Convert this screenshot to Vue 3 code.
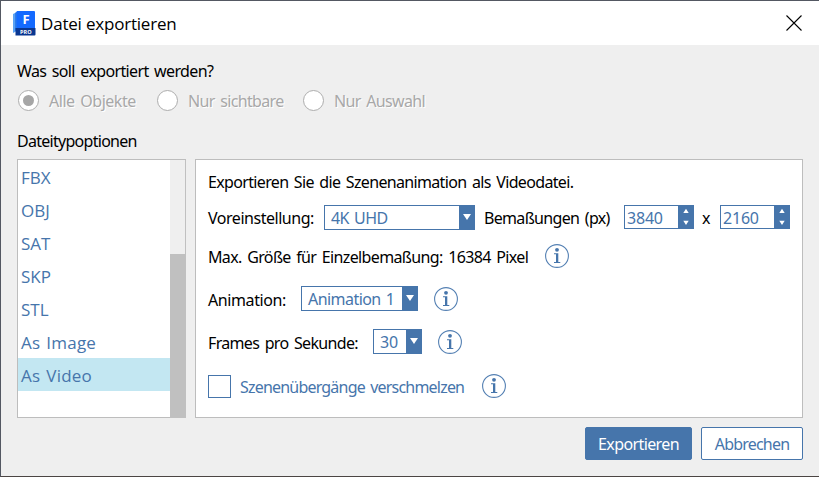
<script setup>
import { ref, h } from 'vue'

const scopes = [
  { label: 'Alle Objekte', cls: 'scope-all' },
  { label: 'Nur sichtbare', cls: 'scope-visible' },
  { label: 'Nur Auswahl', cls: 'scope-selection' },
]
const types = ['FBX', 'OBJ', 'SAT', 'SKP', 'STL', 'As Image', 'As Video']
const selected = ref('As Video')

const InfoIcon = () =>
  h('svg', { class: 'info', width: 24, height: 24, viewBox: '0 0 24 24', fill: 'none' }, [
    h('circle', { cx: 12, cy: 12, r: 11.4, stroke: '#5480b3', 'stroke-width': 1.1 }),
    h('circle', { cx: 12, cy: 5.8, r: 1.9, fill: '#4675ab' }),
    h('path', { d: 'M9 9.2h4.3v8.9h2v1H9v-1h2v-7.800H9z', fill: '#4675ab' }),
  ])

const Caret = () =>
  h('svg', { width: 16, height: 25, viewBox: '0 0 16 25' }, [
    h('path', { d: 'M4 9h8l-4 6z', fill: '#fff' }),
  ])

const Stepper = () =>
  h('svg', { width: 16, height: 24, viewBox: '0 0 16 24' }, [
    h('path', { d: 'M5.3 8L8 3.7 10.7 8zM5.3 15.8h5.4L8 20z', fill: '#fff' }),
  ])
</script>

<template>
  <div class="dialog">
    <header class="titlebar">
      <svg class="logo" width="23" height="26" viewBox="0 0 23 26">
        <path d="M0 3l4-2v19l-4 2z" fill="#5aa2f5" />
        <path d="M2 2l3-2v20H2z" fill="#2f7ce8" />
        <rect x="3.500" y="0" width="18.500" height="20" rx="1" fill="#146aff" />
        <path d="M2.500 17h20V23.500q0 1-1 1h-19z" fill="#0a3791" />
        <text x="13" y="12.800" class="logo-f">F</text>
        <text x="12.800" y="22.500" class="logo-pro">PRO</text>
      </svg>
      <h1 class="title">Datei exportieren</h1>
      <svg class="close" width="16" height="16" viewBox="0 0 16 16">
        <path d="M.5.5l15 15M15.500.5l-15 15" stroke="#000" stroke-width="1.100" />
      </svg>
    </header>

    <main class="body">
      <p class="heading question">Was soll exportiert werden?</p>
      <div class="radios">
        <label v-for="(s, i) in scopes" :key="s.label" class="radio" :class="s.cls">
          <span class="dot" :class="{ on: i === 0 }"></span>
          <span class="radio-text">{{ s.label }}</span>
        </label>
      </div>
      <p class="heading options">Dateitypoptionen</p>

      <div class="columns">
        <div class="list">
          <ul class="items">
            <li v-for="t in types" :key="t" :class="{ active: t === selected, wide: t.includes(' ') }">{{ t }}</li>
          </ul>
          <div class="scrollbar"><div class="thumb"></div></div>
        </div>

        <section class="panel">
          <p class="line intro"><span class="t-intro">Exportieren Sie die Szenenanimation als Videodatei.</span></p>
          <div class="line preset">
            <span class="t-preset">Voreinstellung:</span>
            <div class="select w-preset"><span class="value">4K UHD</span><i class="btn"><Caret /></i></div>
            <span class="t-dims">Bemaßungen (px)</span>
            <div class="spin"><span class="value">3840</span><i class="btn"><Stepper /></i></div>
            <span class="t-x">x</span>
            <div class="spin"><span class="value">2160</span><i class="btn"><Stepper /></i></div>
          </div>
          <div class="line max"><span class="t-max">Max. Größe für Einzelbemaßung: 16384 Pixel</span><InfoIcon /></div>
          <div class="line anim">
            <span class="t-anim">Animation:</span>
            <div class="select w-anim"><span class="value">Animation 1</span><i class="btn"><Caret /></i></div>
            <InfoIcon />
          </div>
          <div class="line fps">
            <span class="t-fps">Frames pro Sekunde:</span>
            <div class="select w-fps"><span class="value">30</span><i class="btn"><Caret /></i></div>
            <InfoIcon />
          </div>
          <div class="line merge">
            <span class="checkbox"></span>
            <span class="t-merge">Szenenübergänge verschmelzen</span>
            <InfoIcon />
          </div>
        </section>
      </div>

      <footer class="footer">
        <button class="primary"><span>Exportieren</span></button>
        <button class="secondary"><span>Abbrechen</span></button>
      </footer>
    </main>
  </div>
</template>

<style>
body { margin: 0; overflow: hidden; }
</style>

<style scoped>
* { box-sizing: border-box; }
.dialog {
  width: 819px; height: 477px; display: flex; flex-direction: column;
  background: #efefef; border: solid #535862; border-width: 1px 0 1px 1px;
  border-bottom-color: #4b4543;
  font-family: "Noto Sans", "Open Sans", sans-serif; font-size: 16px; color: #000;
  white-space: nowrap;
}
.titlebar { height: 44px; flex: none; background: #fff; display: flex; align-items: center; padding: 0 17px 0 12px; }
.logo { margin-top: 1px; }
.logo-f { font: 700 13px "Open Sans", sans-serif; fill: #fff; text-anchor: middle; }
.logo-pro { font: 700 5.5px "Open Sans", sans-serif; fill: #fff; text-anchor: middle; }
.title { margin: 1px auto 0 5px; font: 400 17px/24px "Open Sans", sans-serif; letter-spacing: -0.2px; }
.body { flex: 1; padding: 14px 16px 0; }
.heading { margin: 0; height: 24px; line-height: 24px; }
.question { letter-spacing: -0.64px; word-spacing: 2px; }
.radios { display: flex; height: 21px; margin: 7px 0 0 1px; color: #a8a8a8; }
.radio { display: flex; align-items: center; gap: 10px; }
.scope-all { width: 139px; }
.scope-visible { width: 146px; }
.radio-text { letter-spacing: -0.65px; word-spacing: 2px; text-shadow: 1px 1px 0 #fff; }
.scope-all .radio-text { letter-spacing: -0.48px; }
.dot { width: 21px; height: 21px; border: 1px solid #adadad; border-radius: 50%; background: #fff; display: grid; place-items: center; }
.dot.on::after { content: ""; width: 11px; height: 11px; border-radius: 50%; background: #a6a6a6; }
.options { margin-top: 18px; letter-spacing: -0.72px; }
.columns { display: flex; gap: 9px; height: 259px; margin-top: 6px; }
.list { width: 169px; display: flex; border: solid #bdbdbd; border-width: 1px 0 1px 1px; background: #fff; }
.items { flex: 1; margin: 0; padding: 0; list-style: none; }
.items li { height: 33px; padding: 1px 0 0 3px; line-height: 33px; font-family: "Open Sans", sans-serif; font-size: 17px; color: #4675ab; }
.items li.wide { letter-spacing: 0.2px; word-spacing: 1.5px; }
.items li.active { background: #c3e7f2; }
.scrollbar { width: 16px; margin-bottom: -1px; background: #efefef; border-right: 1px solid #c0c0c0; }
.thumb { height: 164px; margin: 94px -1px 0 0; background: #c0c0c0; }
.panel { width: 608px; border: 1px solid #bdbdbd; background: #fff; padding-left: 12px; }
.line { display: flex; align-items: center; margin: 0; }
.intro { height: 24px; margin-top: 10px; }
.preset { height: 25px; margin-top: 11px; }
.max { height: 24px; margin-top: 14px; }
.anim { height: 25px; margin-top: 18px; }
.fps { height: 25px; margin-top: 18px; }
.merge { height: 24px; margin-top: 20px; }
.t-intro { letter-spacing: -0.66px; word-spacing: 2px; }
.t-preset { width: 116px; letter-spacing: -0.47px; }
.t-dims { width: 140px; margin-left: 9px; letter-spacing: -0.67px; word-spacing: 2px; }
.t-x { width: 26px; padding-left: 8px; }
.t-max { width: 337px; letter-spacing: -0.64px; word-spacing: 2px; padding-top: 1px; }
.t-anim { width: 93px; letter-spacing: -0.4px; padding-top: 2px; }
.t-fps { width: 165px; letter-spacing: -0.67px; word-spacing: 2px; padding-top: 2px; }
.t-merge { width: 242px; margin-left: 9px; color: #4675ab; letter-spacing: -0.8px; word-spacing: 2px; padding-top: 1px; }
.select, .spin { display: flex; height: 25px; border: 1px solid #4675ab; color: #4675ab; }
.spin { width: 70px; height: 24px; align-self: flex-start; }
.value { flex: 1; width: 0; padding-left: 6px; line-height: 24px; letter-spacing: -0.55px; word-spacing: 1.5px; }
.spin .value { padding-left: 2px; line-height: 24px; letter-spacing: -0.2px; }
.w-fps .value { letter-spacing: -0.2px; }
.btn { display: block; width: 16px; margin: -1px; background: #4675ab; }
.btn svg { display: block; }
.w-preset { width: 151px; }
.w-anim { width: 117px; margin-right: 16px; }
.w-fps { width: 49px; margin-right: 16px; }
.checkbox { width: 23px; height: 23px; border: 1px solid #4675ab; background: #fff; }
.footer { display: flex; justify-content: flex-end; gap: 9px; margin-top: 9px; }
button { height: 33px; padding: 0; border: 1px solid #4675ab; border-radius: 2px; font: inherit; letter-spacing: -0.6px; }
.primary { width: 107px; background: #4675ab; color: #fff; }
.secondary { width: 102px; background: #fff; color: #4675ab; letter-spacing: -0.8px; }
</style>
